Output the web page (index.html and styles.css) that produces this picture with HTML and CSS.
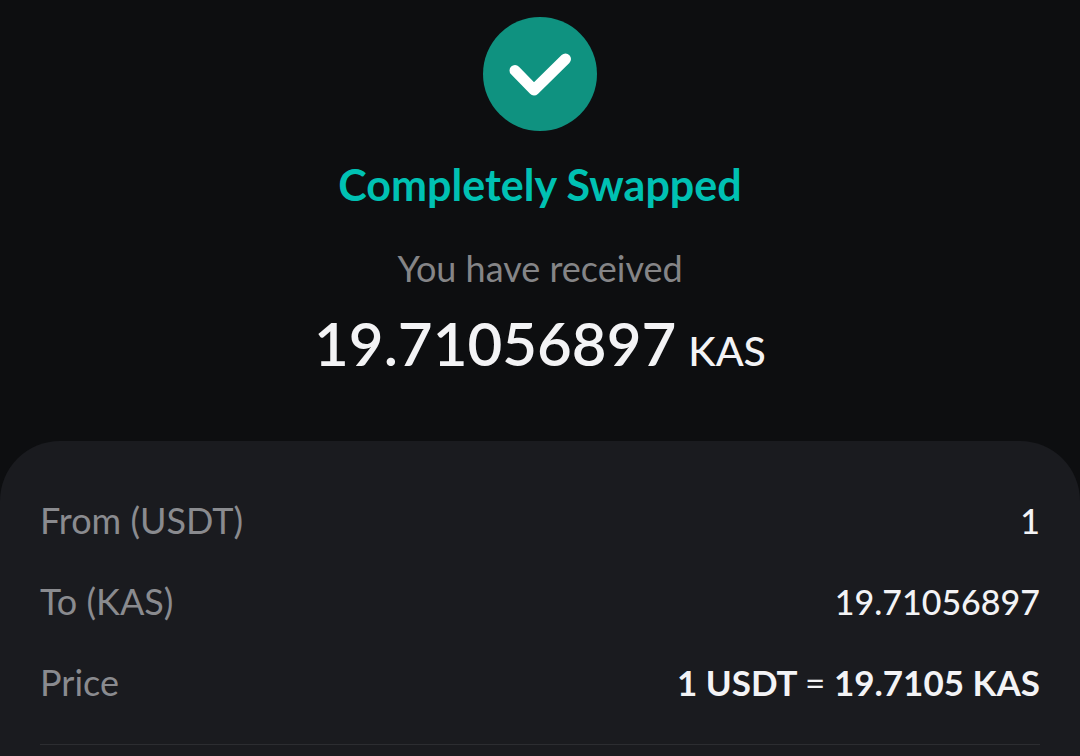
FILE: index.html
```html
<!DOCTYPE html>
<html lang="en">
<head>
    <meta charset="UTF-8">
    <meta name="viewport" content="width=device-width, initial-scale=1.0">
    <title>Completely Swapped</title>
    <link rel="stylesheet" href="styles.css">
</head>
<body>
    <header class="result">
        <svg class="result-icon" viewBox="0 0 114 114" aria-hidden="true">
            <circle cx="57" cy="57" r="57" fill="#0f9280"/>
            <path d="M32 53.500L51 73L82.500 42" fill="none" stroke="#fff" stroke-width="11" stroke-linecap="round" stroke-linejoin="round"/>
        </svg>
        <h1 class="result-title">Completely Swapped</h1>
        <p class="result-label">You have received</p>
        <p class="result-amount">19.71056897 <span class="result-unit">KAS</span></p>
    </header>

    <main class="details">
        <dl class="detail-list">
            <div class="detail-row">
                <dt>From (USDT)</dt>
                <dd>1</dd>
            </div>
            <div class="detail-row">
                <dt>To (KAS)</dt>
                <dd>19.71056897</dd>
            </div>
            <div class="detail-row">
                <dt>Price</dt>
                <dd class="price">1 USDT <span class="equals">=</span> 19.7105 KAS</dd>
            </div>
        </dl>
    </main>
</body>
</html>
```
FILE: styles.css
```css
* {
    box-sizing: border-box;
}

body {
    display: flex;
    flex-direction: column;
    min-height: 100vh;
    margin: 0;
    background-color: #0d0e10;
    color: #f3f3f5;
    font-family: Lato, "Open Sans", sans-serif;
    font-size: 36px;
    line-height: 48px;
}

.result {
    display: flex;
    flex-direction: column;
    align-items: center;
    padding: 17px 20px 54px;
}

.result-icon {
    width: 114px;
    height: 114px;
}

.result-title {
    margin: 30px 0 0;
    color: #00c1b3;
    font-size: 43px;
    font-weight: 700;
    line-height: 48px;
}

.result-label {
    margin: 35px 0 0;
    color: #858587;
}

.result-amount {
    display: flex;
    align-items: baseline;
    gap: 12px;
    margin: 15px 0 0;
    font-size: 60px;
    font-weight: 600;
    line-height: 72px;
}

.result-unit {
    font-size: 41px;
    font-weight: 500;
}

.details {
    flex: 1;
    padding: 55px 40px 0;
    border-radius: 60px 60px 0 0;
    background-color: #1a1b1f;
}

.detail-list {
    display: flex;
    flex-direction: column;
    gap: 32px;
    margin: 0;
    padding-bottom: 38px;
    border-bottom: 1px solid #2c2d31;
}

.detail-row {
    display: flex;
    align-items: baseline;
    justify-content: space-between;
}

.detail-row dt {
    color: #8a8b8f;
}

.detail-row dd {
    margin: 0;
    font-size: 34px;
    font-weight: 500;
}

.detail-row .price {
    font-size: 35px;
    font-weight: 700;
}

.price .equals {
    font-weight: 400;
}
```
